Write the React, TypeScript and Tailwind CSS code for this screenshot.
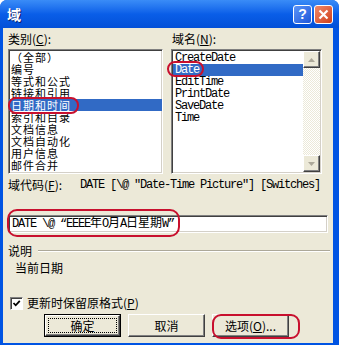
const leftItems = ['（全部）', '编号', '等式和公式', '链接和引用', '日期和时间', '索引和目录', '文档信息', '文档自动化', '用户信息', '邮件合并'];
const rightItems = ['CreateDate', 'Date', 'EditTime', 'PrintDate', 'SaveDate', 'Time'];

const cjk = "font-['SimSun','Noto_Sans_CJK_SC',sans-serif]";
const mono = "font-['Liberation_Mono','Noto_Sans_CJK_SC',monospace] tracking-[-1.2px]";
const sunken =
  'border border-t-[#808080] border-l-[#808080] border-b-white border-r-white shadow-[inset_1px_1px_0_#404040,inset_-1px_-1px_0_#d4d0c8]';
const raised =
  'border border-t-white border-l-white border-b-[#404040] border-r-[#404040] shadow-[inset_-1px_-1px_0_#808080] bg-[#ece9d8]';

function ScrollBtn({ down }: { down?: boolean }) {
  return (
    <div className={`h-[17px] w-[17px] flex items-center justify-center ${raised}`}>
      <svg width="7" height="4" viewBox="0 0 7 4">
        <path d={down ? 'M0 0h7L3.5 4z' : 'M0 4h7L3.5 0z'} fill="#aca899" />
      </svg>
    </div>
  );
}

export default function App() {
  return (
    <div className={`relative w-[339px] h-[345px] bg-[#0054e3] rounded-t-[7px] flex flex-col ${cjk} text-[12px] text-black`}>
      {/* title bar */}
      <div className="h-[28px] flex items-center justify-between pl-[7px] pr-[6px] rounded-t-[7px] bg-gradient-to-b from-[#3a8cf7] via-[#0a5ee8] to-[#0350d8]">
        <span className="text-white font-bold text-[14px] [text-shadow:1px_1px_0_#0a1e6e]">域</span>
        <div className="flex gap-[2px]">
          <div className="w-[19px] h-[19px] rounded-[3px] border border-white bg-gradient-to-br from-[#5c95f8] to-[#1f55d8] flex items-center justify-center text-white font-bold text-[14px] font-['Liberation_Sans',sans-serif]">
            ?
          </div>
          <div className="w-[19px] h-[19px] rounded-[3px] border border-white bg-gradient-to-br from-[#f08868] to-[#cf3d14] flex items-center justify-center">
            <svg width="11" height="11" viewBox="0 0 11 11">
              <path d="M1.5 1.5l8 8M9.5 1.5l-8 8" stroke="#fff" strokeWidth="2.2" />
            </svg>
          </div>
        </div>
      </div>

      {/* content */}
      <div className="flex-1 ml-[3px] mr-[6px] mb-[2px] bg-[#ece9d8] flex flex-col pl-[5px] pt-[4px]">
        <div className="flex gap-[8px]">
          <div className="w-[155px] flex flex-col">
            <div className="h-[17px] leading-[14px]">
              类别(<span className="underline">C</span>):
            </div>
            <div className={`h-[125px] bg-white ${sunken} pt-[1px]`}>
              {leftItems.map((t, i) => (
                <div
                  key={t}
                  className={`h-[12px] leading-[12px] text-[11px] tracking-[1px] pl-[2px] whitespace-nowrap ${i === 4 ? 'bg-[#316ac5] text-white' : ''}`}
                >
                  {t}
                </div>
              ))}
            </div>
          </div>
          <div className="w-[151px] flex flex-col">
            <div className="h-[17px] leading-[14px] pl-[1px]">
              域名(<span className="underline">N</span>):
            </div>
            <div className={`h-[125px] bg-white ${sunken} p-[1px] flex`}>
              <div className={`flex-1 pt-[1px] ${mono}`}>
                {rightItems.map((t, i) => (
                  <div
                    key={t}
                    className={`h-[12px] leading-[12px] pl-[2px] ${i === 1 ? 'bg-[#316ac5] text-white' : ''}`}
                  >
                    {t}
                  </div>
                ))}
              </div>
              <div className="w-[17px] flex flex-col bg-[image:repeating-conic-gradient(#ffffff_0%_25%,#ece9d8_0%_50%)] bg-[length:2px_2px]">
                <ScrollBtn />
                <div className="flex-1" />
                <ScrollBtn down />
              </div>
            </div>
          </div>
        </div>

        <div className="mt-[4px] h-[14px] leading-[14px] flex whitespace-nowrap">
          <span className="w-[72px]">
            域代码(<span className="underline">F</span>):
          </span>
          <span className={mono}>DATE [\@ "Date-Time Picture"] [Switches]</span>
        </div>

        <div className={`mt-[23px] w-[320px] h-[18px] bg-white ${sunken} flex items-center pl-[3px]`}>
          <span className={`${mono} whitespace-nowrap leading-[12px]`}>
            DATE \@ “EEEE<span className="tracking-normal">年</span>O<span className="tracking-normal">月</span>A
            <span className="tracking-normal">日星期</span>W”
          </span>
        </div>

        <div className="mt-[11px] h-[13px] flex items-center gap-[6px] pr-[3px]">
          <span className="leading-[13px]">说明</span>
          <div className="flex-1 h-[2px] border-t border-t-[#aca899] border-b border-b-white" />
        </div>

        <div className="mt-[5px] h-[12px] leading-[12px] pl-[7px]">当前日期</div>

        <div className="mt-[23px] h-[12px] flex items-center gap-[4px] pl-[2px]">
          <div className="w-[13px] h-[13px] bg-white border border-t-[#808080] border-l-[#808080] border-b-white border-r-white shadow-[inset_1px_1px_0_#404040] flex items-center justify-center">
            <svg width="9" height="9" viewBox="0 0 9 9">
              <path d="M1.5 4l2.2 2.3L7.8 1.8" stroke="#000" strokeWidth="1.8" fill="none" />
            </svg>
          </div>
          <span className="leading-[12px]">
            更新时保留原格式(<span className="underline">P</span>)
          </span>
        </div>

        <div className="mt-[5px] h-[23px] flex gap-[7px] pl-[36px]">
          <div className="w-[77px] h-[23px] border border-black">
            <div className={`w-full h-full ${raised} p-[2px]`}>
              <div className="w-full h-full border border-dotted border-black flex items-center justify-center">确定</div>
            </div>
          </div>
          <div className={`w-[77px] h-[23px] ${raised} flex items-center justify-center`}>取消</div>
          <div className={`w-[77px] h-[23px] ${raised} flex items-center justify-center`}>
            选项(<span className="underline">O</span>)...
          </div>
        </div>
      </div>

      {/* red annotation rings */}
      <div className="absolute left-[8px] top-[97px] w-[71px] h-[17px] rounded-[8px] border-2 border-[#c8102e]" />
      <div className="absolute left-[167px] top-[61px] w-[37px] h-[16px] rounded-[8px] border-2 border-[#c8102e]" />
      <div className="absolute left-[7px] top-[209px] w-[173px] h-[28px] rounded-[10px] border-2 border-[#c8102e]" />
      <div className="absolute left-[212px] top-[314px] w-[88px] h-[25px] rounded-[9px] border-2 border-[#c8102e]" />
    </div>
  );
}
